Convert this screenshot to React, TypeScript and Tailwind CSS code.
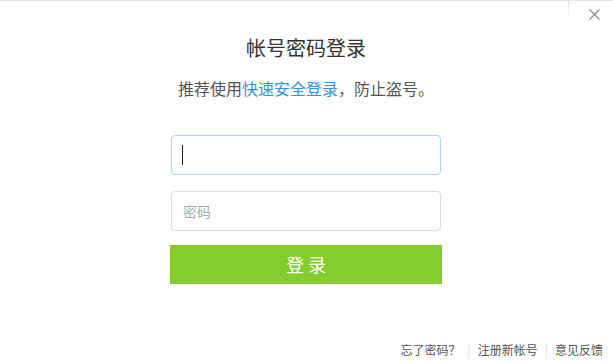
const cjk = { fontFamily: '"Microsoft YaHei", "Noto Sans CJK SC", "Noto Sans", sans-serif' };

export default function App() {
  return (
    <div
      style={cjk}
      className="relative flex h-[363px] w-[613px] flex-col items-center overflow-hidden border-t border-[#e8e8e8] bg-white pr-px"
    >
      {/* close */}
      <div className="absolute left-[568px] top-0 h-[22px] w-px bg-gradient-to-b from-[#e2e2e2] to-transparent" />
      <button className="absolute right-[11px] top-[5px] flex h-[16px] w-[16px] items-center justify-center">
        <svg width="11" height="11" viewBox="0 0 11 11" stroke="#8a8a8a" strokeWidth="1.2" fill="none">
          <path d="M0.5 0.5 L10.5 10.5 M10.5 0.5 L0.5 10.5" />
        </svg>
      </button>

      <h1 className="mt-[33px] text-[20px] leading-[28px] text-[#333]">帐号密码登录</h1>
      <p className="mt-[14px] text-[16px] leading-[24px] text-[#555]">
        推荐使用<a className="text-[#3a8ee0]">快速安全登录</a>，防止盗号。
      </p>

      <div className="mt-[35px] flex h-[40px] w-[270px] items-center rounded-[4px] border border-[#a8d4fc] px-[10px]">
        <span className="h-[20px] w-px bg-[#222]" />
      </div>
      <div className="mt-[16px] flex h-[40px] w-[270px] items-center rounded-[4px] border border-[#dcdcdc] px-[11px]">
        <span className="text-[14px] text-[#aaa]">密码</span>
      </div>
      <button className="mt-[14px] h-[39px] w-[272px] bg-[#85cd2f] text-[18px] text-white">登 录</button>

      <div className="mt-auto flex w-full items-center justify-end pb-[4px] pr-[9px] text-[12px] leading-[18px] text-[#555]">
        <a>忘了密码？</a>
        <span className="mx-[7px] text-[#e0d8dc]">|</span>
        <a>注册新帐号</a>
        <span className="mx-[7px] text-[#dddddd]">|</span>
        <a>意见反馈</a>
      </div>
    </div>
  );
}
